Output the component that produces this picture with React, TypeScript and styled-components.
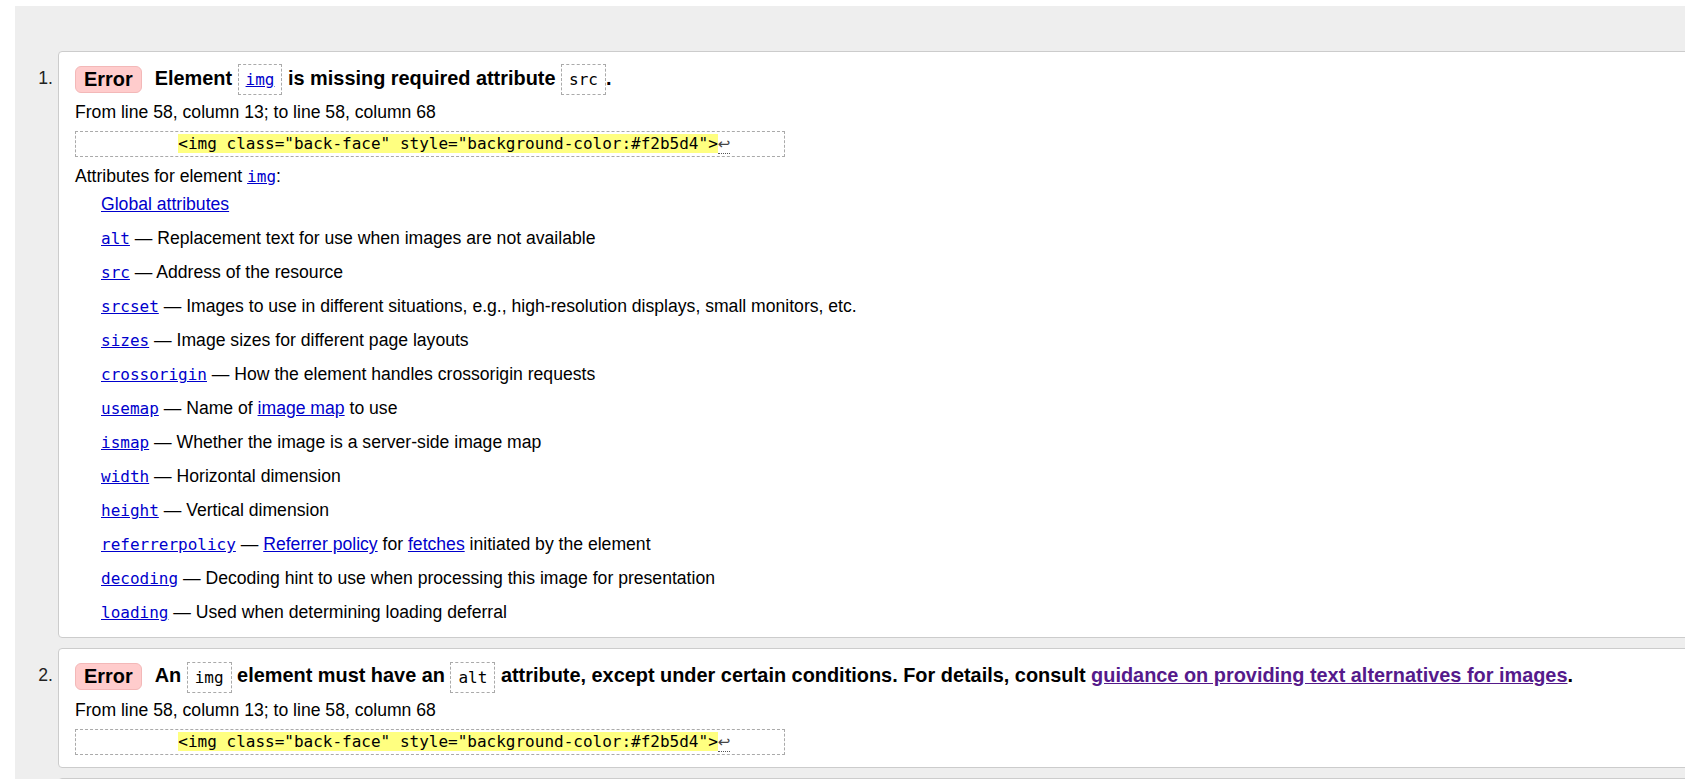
import React from 'react';
import styled, {createGlobalStyle} from 'styled-components';

const GlobalStyle = createGlobalStyle`
  html, body {
    margin: 0;
    padding: 0;
    overflow: hidden;
    background: #ffffff;
  }
  body {
    font-family: "Liberation Sans", Arial, sans-serif;
    font-size: 17.6px;
    color: #000000;
  }
`;

const Page = styled.div`
  padding: 6px 0 0 15px;
`;

const Panel = styled.div`
  background: #eeeeee;
  padding-top: 45px;
  min-height: 800px;
`;

const List = styled.ol`
  list-style: none;
  margin: 0;
  padding: 0;
  display: flex;
  flex-direction: column;
  gap: 10px;
`;

const Item = styled.li`
  display: grid;
  grid-template-columns: 43px 1fr;
  margin-right: -40px;
`;

const Num = styled.div`
  text-align: right;
  padding-right: 5px;
  padding-top: 17px;
  line-height: 20px;
  color: #222;
`;

const Card = styled.div<{$bottom: number}>`
  background: #ffffff;
  border: 1px solid #cccccc;
  border-radius: 4px;
  min-height: 40px;
  padding: 11px 17px ${p => p.$bottom}px 16px;
`;

const Title = styled.div`
  display: flex;
  align-items: center;
  font-size: 19.9px;
  font-weight: bold;
  line-height: 31px;
  white-space: nowrap;
`;

const Badge = styled.span`
  display: inline-block;
  height: 25px;
  line-height: 25px;
  padding: 0 8px;
  margin-right: 13px;
  background: #ffcccc;
  border: 1px solid #f3b8b8;
  border-radius: 6px;
`;

const TitleText = styled.span``;

const Code = styled.code`
  display: inline-block;
  font-family: "DejaVu Sans Mono", "Liberation Mono", monospace;
  font-size: 16px;
  font-weight: normal;
  line-height: 19px;
  padding: 5px 7px;
  border: 1px dashed #aaaaaa;
  vertical-align: middle;
`;

const Link = styled.a<{$visited?: boolean}>`
  color: ${p => (p.$visited ? '#551a8b' : '#0000cc')};
  text-decoration: underline;
`;

const Meta = styled.div`
  margin-top: 7px;
  line-height: 20px;
`;

const Extract = styled.div`
  margin-top: 9px;
  width: 699px;
  padding: 2px 3px 2px 6px;
  border: 1px dashed #aaaaaa;
  font-family: "DejaVu Sans Mono", "Liberation Mono", monospace;
  font-size: 16px;
  line-height: 20px;
  white-space: pre;
`;

const Mark = styled.mark`
  background: #ffff80;
  color: #000;
`;

const Lf = styled.span`
  font-family: "DejaVu Sans", sans-serif;
  font-size: 15px;
  color: #444;
  border-bottom: 1px dotted #555;
`;

const AttrHeader = styled.div`
  margin-top: 9px;
  line-height: 20px;
`;

const AttrList = styled.dl`
  margin: 8px 0 0 26px;
  display: flex;
  flex-direction: column;
  gap: 14px;
`;

const AttrRow = styled.dd`
  margin: 0;
  height: 20px;
  line-height: 20px;
`;

const AttrCode = styled.code`
  font-family: "DejaVu Sans Mono", "Liberation Mono", monospace;
  font-size: 16px;
  line-height: 16px;
`;

const attrs: {name: string; text: React.ReactNode}[] = [
  {name: 'alt', text: 'Replacement text for use when images are not available'},
  {name: 'src', text: 'Address of the resource'},
  {
    name: 'srcset',
    text: 'Images to use in different situations, e.g., high-resolution displays, small monitors, etc.',
  },
  {name: 'sizes', text: 'Image sizes for different page layouts'},
  {name: 'crossorigin', text: 'How the element handles crossorigin requests'},
  {
    name: 'usemap',
    text: (
      <>
        Name of <Link href="#">image map</Link> to use
      </>
    ),
  },
  {name: 'ismap', text: 'Whether the image is a server-side image map'},
  {name: 'width', text: 'Horizontal dimension'},
  {name: 'height', text: 'Vertical dimension'},
  {
    name: 'referrerpolicy',
    text: (
      <>
        <Link href="#">Referrer policy</Link> for <Link href="#">fetches</Link>{' '}
        initiated by the element
      </>
    ),
  },
  {name: 'decoding', text: 'Decoding hint to use when processing this image for presentation'},
  {name: 'loading', text: 'Used when determining loading deferral'},
];

const ExtractLine = () => (
  <Extract>
    {'          '}
    <Mark>{'<img class="back-face" style="background-color:#f2b5d4">'}</Mark>
    <Lf>↩</Lf>
  </Extract>
);

const location = 'From line 58, column 13; to line 58, column 68';

export default function App() {
  return (
    <Page>
      <GlobalStyle />
      <Panel>
        <List>
          <Item>
            <Num>1.</Num>
            <Card $bottom={15}>
              <Title>
                <Badge>Error</Badge>
                <TitleText>
                  Element{' '}
                  <Code>
                    <Link href="#">img</Link>
                  </Code>{' '}
                  is missing required attribute <Code>src</Code>.
                </TitleText>
              </Title>
              <Meta>{location}</Meta>
              <ExtractLine />
              <AttrHeader>
                Attributes for element <AttrCode><Link href="#">img</Link></AttrCode>:
              </AttrHeader>
              <AttrList>
                <AttrRow>
                  <Link href="#">Global attributes</Link>
                </AttrRow>
                {attrs.map(a => (
                  <AttrRow key={a.name}>
                    <AttrCode>
                      <Link href="#">{a.name}</Link>
                    </AttrCode>{' '}
                    — {a.text}
                  </AttrRow>
                ))}
              </AttrList>
            </Card>
          </Item>
          <Item>
            <Num>2.</Num>
            <Card $bottom={12}>
              <Title>
                <Badge>Error</Badge>
                <TitleText>
                  An <Code>img</Code> element must have an <Code>alt</Code>{' '}
                  attribute, except under certain conditions. For details, consult{' '}
                  <Link href="#" $visited>
                    guidance on providing text alternatives for images
                  </Link>
                  .
                </TitleText>
              </Title>
              <Meta>{location}</Meta>
              <ExtractLine />
            </Card>
          </Item>
          <Item>
            <Num />
            <Card $bottom={10} />
          </Item>
        </List>
      </Panel>
    </Page>
  );
}
